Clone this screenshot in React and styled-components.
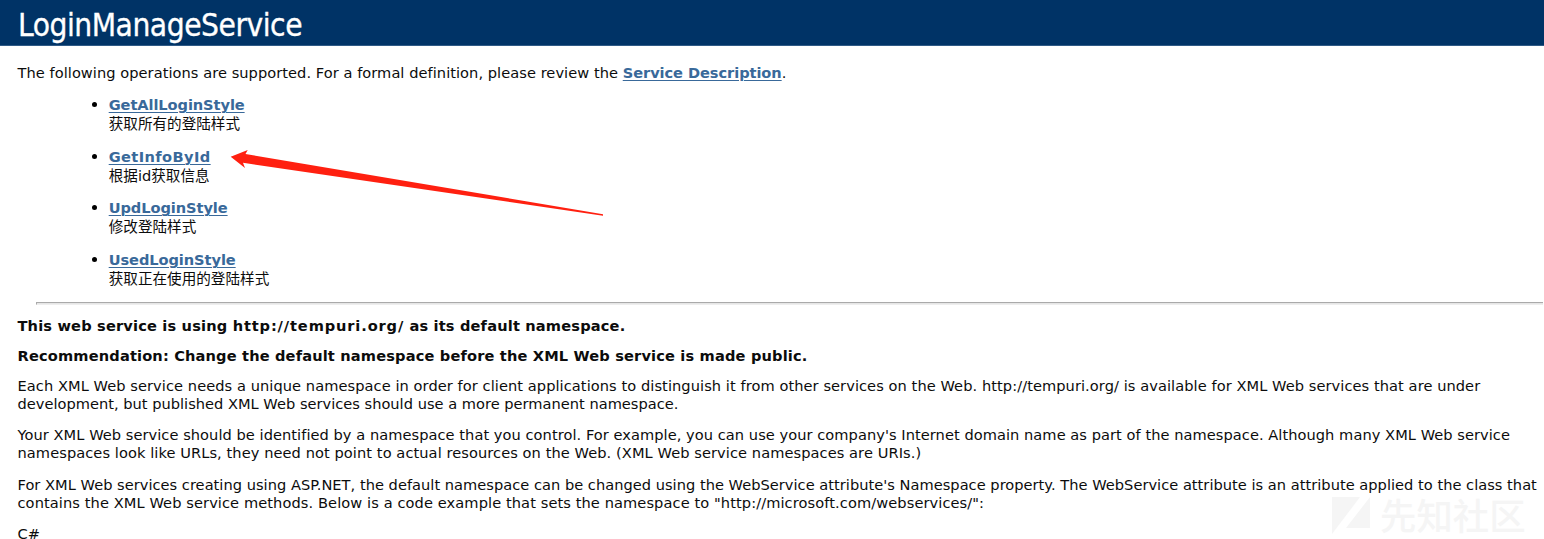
import React from "react";
import styled, { createGlobalStyle } from "styled-components";

const GlobalStyle = createGlobalStyle`
  html, body { margin: 0; padding: 0; background: #fff; }
`;

const Page = styled.main`
  position: relative;
  height: 539px;
  overflow: hidden;
  color: #0c0c0c;
  background: #fff;
  font-family: "DejaVu Sans", "Noto Sans CJK SC", sans-serif;
  font-size: 14.6px;
`;

const Header = styled.header`
  box-sizing: border-box;
  height: 46px;
  padding: 5px 0 0 18px;
  background: #003366;
  border-bottom: 1px solid #2f5a86;
`;

const Title = styled.h1`
  margin: 0;
  color: #fff;
  font: 400 31.4px/40px "DejaVu Sans Condensed", "DejaVu Sans", sans-serif;
  letter-spacing: -0.48px;
  white-space: nowrap;
  -webkit-text-stroke: 0.3px #fff;
`;

const Content = styled.div`
  display: flex;
  flex-direction: column;
  padding-left: 17.5px;
`;

const Intro = styled.p`
  margin: 18px 0 0;
  line-height: 18px;
  white-space: nowrap;
`;

const Line = styled.span`
  display: block;
  white-space: nowrap;
  letter-spacing: ${(p) => p.$track || 0}px;
`;

const Run = styled.span`
  letter-spacing: ${(p) => p.$track || 0}px;
`;

const Link = styled.a`
  color: #39699a;
  font-weight: 700;
  text-decoration: underline;
  text-decoration-thickness: 1px;
  text-underline-offset: 2px;
  letter-spacing: ${(p) => p.$track || 0}px;
`;

const Operations = styled.ul`
  display: flex;
  flex-direction: column;
  gap: 14.7px;
  margin: 14px 0 0;
  padding: 0;
  list-style: none;
`;

const Operation = styled.li`
  display: grid;
  grid-template-columns: 74.5px 16.7px auto;
  align-items: start;
  line-height: 18px;
`;

const Bullet = styled.i`
  grid-column: 2;
  width: 5px;
  height: 5px;
  margin-top: 6px;
  border-radius: 50%;
  background: #000;
`;

const OperationText = styled.div`
  display: flex;
  flex-direction: column;
  align-items: flex-start;
`;

const Description = styled.span`
  height: 18px;
  margin-top: 1px;
`;

const Rule = styled.hr`
  box-sizing: border-box;
  align-self: stretch;
  height: 3px;
  margin: 14.4px 1px 0 18.5px;
  border: 0 solid;
  border-width: 1px 0 1px 1px;
  border-color: #aaa #eee #eee #aaa;
  background: #e6e6e6;
`;

const Notice = styled.h3`
  margin: ${(p) => p.$top}px 0 0;
  font-size: 14.6px;
  line-height: 18px;
  font-weight: 700;
  white-space: nowrap;
`;

const Paragraph = styled.p`
  margin: ${(p) => p.$top || 14.3}px 0 0;
  line-height: 17.6px;
`;

const Watermark = styled.div`
  position: absolute;
  left: 1332px;
  top: 494px;
  display: flex;
  align-items: center;
  gap: 10px;
  color: #f5f5f5;
  font: 500 36.4px/38px "Noto Sans CJK SC", sans-serif;
  white-space: nowrap;
`;

const Arrow = styled.svg`
  position: absolute;
  left: 220px;
  top: 140px;
`;

const operations = [
  { name: "GetAllLoginStyle", text: "获取所有的登陆样式", track: -0.08 },
  { name: "GetInfoById", text: "根据id获取信息", track: 0.4 },
  { name: "UpdLoginStyle", text: "修改登陆样式", track: -0.07 },
  { name: "UsedLoginStyle", text: "获取正在使用的登陆样式", track: -0.07 },
];

const paragraphs = [
  [
    ["Each XML Web service needs a unique namespace in order for client applications to distinguish it from other services on the Web. http://tempuri.org/ is available for XML Web services that are under", 0.072],
    ["development, but published XML Web services should use a more permanent namespace.", 0.015],
  ],
  [
    ["Your XML Web service should be identified by a namespace that you control. For example, you can use your company's Internet domain name as part of the namespace. Although many XML Web service", 0.054],
    ["namespaces look like URLs, they need not point to actual resources on the Web. (XML Web service namespaces are URIs.)", 0.078],
  ],
  [
    ["For XML Web services creating using ASP.NET, the default namespace can be changed using the WebService attribute's Namespace property. The WebService attribute is an attribute applied to the class that", 0.028],
    ['contains the XML Web service methods. Below is a code example that sets the namespace to "http://microsoft.com/webservices/":', 0.093],
  ],
  [["C#", 0]],
];

export default function App() {
  return (
    <Page>
      <GlobalStyle />
      <Header>
        <Title>LoginManageService</Title>
      </Header>
      <Watermark>
        <svg width="38" height="40" viewBox="0 0 38 40" fill="currentColor">
          <path d="M0 3H28L0 40Z" />
          <path d="M38 3V34H14Z" />
        </svg>
        先知社区
      </Watermark>
      <Content>
        <Intro>
          <Run $track={0.054}>
            The following operations are supported. For a formal definition, please review the{" "}
          </Run>
          <Link $track={-0.064}>Service Description</Link>.
        </Intro>
        <Operations>
          {operations.map((op) => (
            <Operation key={op.name}>
              <Bullet />
              <OperationText>
                <Link $track={op.track}>{op.name}</Link>
                <Description>{op.text}</Description>
              </OperationText>
            </Operation>
          ))}
        </Operations>
        <Rule />
        <Notice $top={11.7}>
          <Run $track={0.17}>This web service is using </Run>
          <Run $track={0.87}>http://tempuri.org/</Run>
          <Run $track={0.17}> as its default namespace.</Run>
        </Notice>
        <Notice $top={12}>
          <Run $track={0.158}>
            Recommendation: Change the default namespace before the XML Web service is made public.
          </Run>
        </Notice>
        {paragraphs.map((lines, i) => (
          <Paragraph key={i} $top={i === 0 ? 11.8 : undefined}>
            {lines.map(([text, track]) => (
              <Line key={text} $track={track}>{text}</Line>
            ))}
          </Paragraph>
        ))}
      </Content>
      <Arrow width="390" height="82" viewBox="0 0 390 82" fill="#ff2010">
        <path d="M10.7 16.7L27.7 10L25.5 14L383 74.2V75.8L23 22.8L25 28Z" />
      </Arrow>
    </Page>
  );
}
